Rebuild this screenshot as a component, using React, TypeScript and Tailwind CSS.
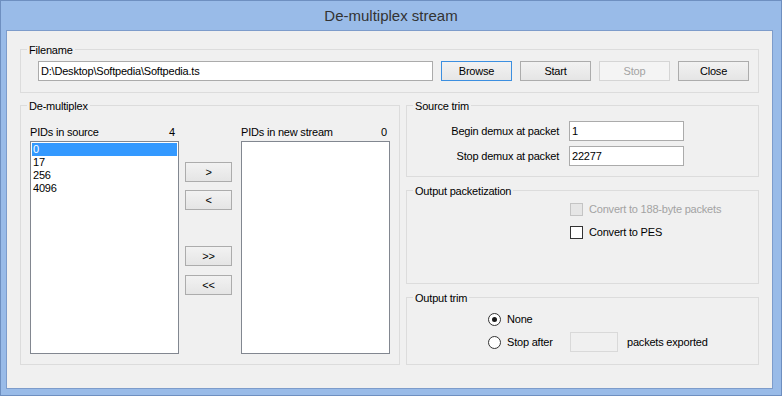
import type { ReactNode } from 'react'

const font = "font-['Liberation_Sans',Arial,sans-serif]"

function Group({ label, className, children }: { label: string; className: string; children?: ReactNode }) {
  return (
    <div className={`relative border border-[#dcdcdc] ${className}`}>
      <span className="absolute -top-[6px] left-[6px] bg-[#f0f0f0] px-[2px] leading-[13px]">{label}</span>
      {children}
    </div>
  )
}

function Button({ children, w, focused, disabled }: { children: ReactNode; w: string; focused?: boolean; disabled?: boolean }) {
  const border = disabled ? 'border-[#d5d5d5] text-[#a3a3a3] bg-[#f4f4f4]' : focused ? 'border-[#3c8fe0] bg-linear-to-b from-[#f2f2f2] to-[#e6e6e6]' : 'border-[#acacac] bg-linear-to-b from-[#f2f2f2] to-[#e5e5e5]'
  return (
    <div className={`${w} flex h-[20px] items-center justify-center border ${border} leading-[18px]`}>
      {children}
    </div>
  )
}

function TextBox({ value, w, disabled }: { value?: string; w: string; disabled?: boolean }) {
  return (
    <div className={`${w} h-[20px] border px-[2px] leading-[18px] ${disabled ? 'border-[#d9d9d9] bg-[#f0f0f0]' : 'border-[#ababab] bg-white'}`}>
      {value}
    </div>
  )
}

function Check({ label, disabled }: { label: string; disabled?: boolean }) {
  return (
    <div className="flex h-[13px] items-center gap-[6px] leading-[13px]">
      <div className={`h-[13px] w-[13px] border ${disabled ? 'border-[#c4c4c4] bg-[#e6e6e6]' : 'border-[#333] bg-white'}`} />
      <span className={disabled ? 'text-[#a3a3a3]' : ''}>{label}</span>
    </div>
  )
}

function Radio({ checked }: { checked?: boolean }) {
  return (
    <div className="flex h-[13px] w-[13px] items-center justify-center rounded-full border border-[#333] bg-white">
      {checked && <div className="h-[5px] w-[5px] rounded-full bg-[#1a1a1a]" />}
    </div>
  )
}

const source = ['0', '17', '256', '4096']

export default function App() {
  return (
    <div className={`${font} flex h-[396px] w-[782px] flex-col border border-[#6e8fc0] bg-[#99bbe8] text-[11px] tracking-[-0.2px] text-black`}>
      <div className="flex h-[29px] items-center justify-center pt-[1px] text-[15px] tracking-normal text-[#333]">De-multiplex stream</div>

      <div className="ml-[5px] mr-[8px] h-[359px] border border-[#7d9ccb] bg-[#f0f0f0] px-[13px] pt-[18px]">
        <Group label="Filename" className="h-[44px] w-[739px]">
          <div className="flex gap-[8px] pl-[17px] pt-[11px]">
            <TextBox value="D:\Desktop\Softpedia\Softpedia.ts" w="w-[395px]" />
            <Button w="w-[71px]" focused>Browse</Button>
            <Button w="w-[71px]">Start</Button>
            <Button w="w-[71px]" disabled>Stop</Button>
            <Button w="w-[71px]">Close</Button>
          </div>
        </Group>

        <div className="mt-[12px] flex gap-[6px]">
          <Group label="De-multiplex" className="h-[260px] w-[380px]">
            <div className="flex pl-[9px] pt-[20px]">
              <div className="w-[149px]">
                <div className="mb-[2px] flex h-[13px] justify-between pr-[4px] leading-[13px]">
                  <span>PIDs in source</span>
                  <span>4</span>
                </div>
                <div className="h-[213px] border border-[#828790] bg-white p-[1px]">
                  {source.map((pid, i) => (
                    <div key={pid} className={`h-[13px] pl-[1px] leading-[13px] ${i === 0 ? 'bg-[#3399ff] text-white' : ''}`}>
                      {pid}
                    </div>
                  ))}
                </div>
              </div>

              <div className="ml-[6px] mr-[9px] flex w-[47px] flex-col pt-[36px]">
                <Button w="w-[47px]">&gt;</Button>
                <div className="mt-[8px]"><Button w="w-[47px]">&lt;</Button></div>
                <div className="mt-[36px]"><Button w="w-[47px]">&gt;&gt;</Button></div>
                <div className="mt-[9px]"><Button w="w-[47px]">&lt;&lt;</Button></div>
              </div>

              <div className="w-[149px]">
                <div className="mb-[2px] flex h-[13px] justify-between pr-[3px] leading-[13px]">
                  <span>PIDs in new stream</span>
                  <span>0</span>
                </div>
                <div className="h-[213px] border border-[#828790] bg-white" />
              </div>
            </div>
          </Group>

          <div className="flex w-[353px] flex-col gap-[13px]">
            <Group label="Source trim" className="h-[72px]">
              <div className="flex flex-col gap-[5px] pt-[15px]">
                <div className="flex items-center">
                  <span className="w-[152px] text-right leading-[20px]">Begin demux at packet</span>
                  <div className="ml-[10px]"><TextBox value="1" w="w-[115px]" /></div>
                </div>
                <div className="flex items-center">
                  <span className="w-[152px] text-right leading-[20px]">Stop demux at packet</span>
                  <div className="ml-[10px]"><TextBox value="22277" w="w-[115px]" /></div>
                </div>
              </div>
            </Group>

            <Group label="Output packetization" className="h-[94px]">
              <div className="flex flex-col gap-[10px] pl-[163px] pt-[12px]">
                <Check label="Convert to 188-byte packets" disabled />
                <Check label="Convert to PES" />
              </div>
            </Group>

            <Group label="Output trim" className="h-[68px]">
              <div className="flex flex-col gap-[6px] pl-[81px] pt-[15px]">
                <div className="flex h-[13px] items-center gap-[6px] leading-[13px]">
                  <Radio checked />
                  <span>None</span>
                </div>
                <div className="flex items-center">
                  <div className="flex w-[82px] items-center gap-[6px]">
                    <Radio />
                    <span className="leading-[20px]">Stop after</span>
                  </div>
                  <TextBox w="w-[48px]" disabled />
                  <span className="ml-[9px] leading-[20px]">packets exported</span>
                </div>
              </div>
            </Group>
          </div>
        </div>
      </div>
    </div>
  )
}
